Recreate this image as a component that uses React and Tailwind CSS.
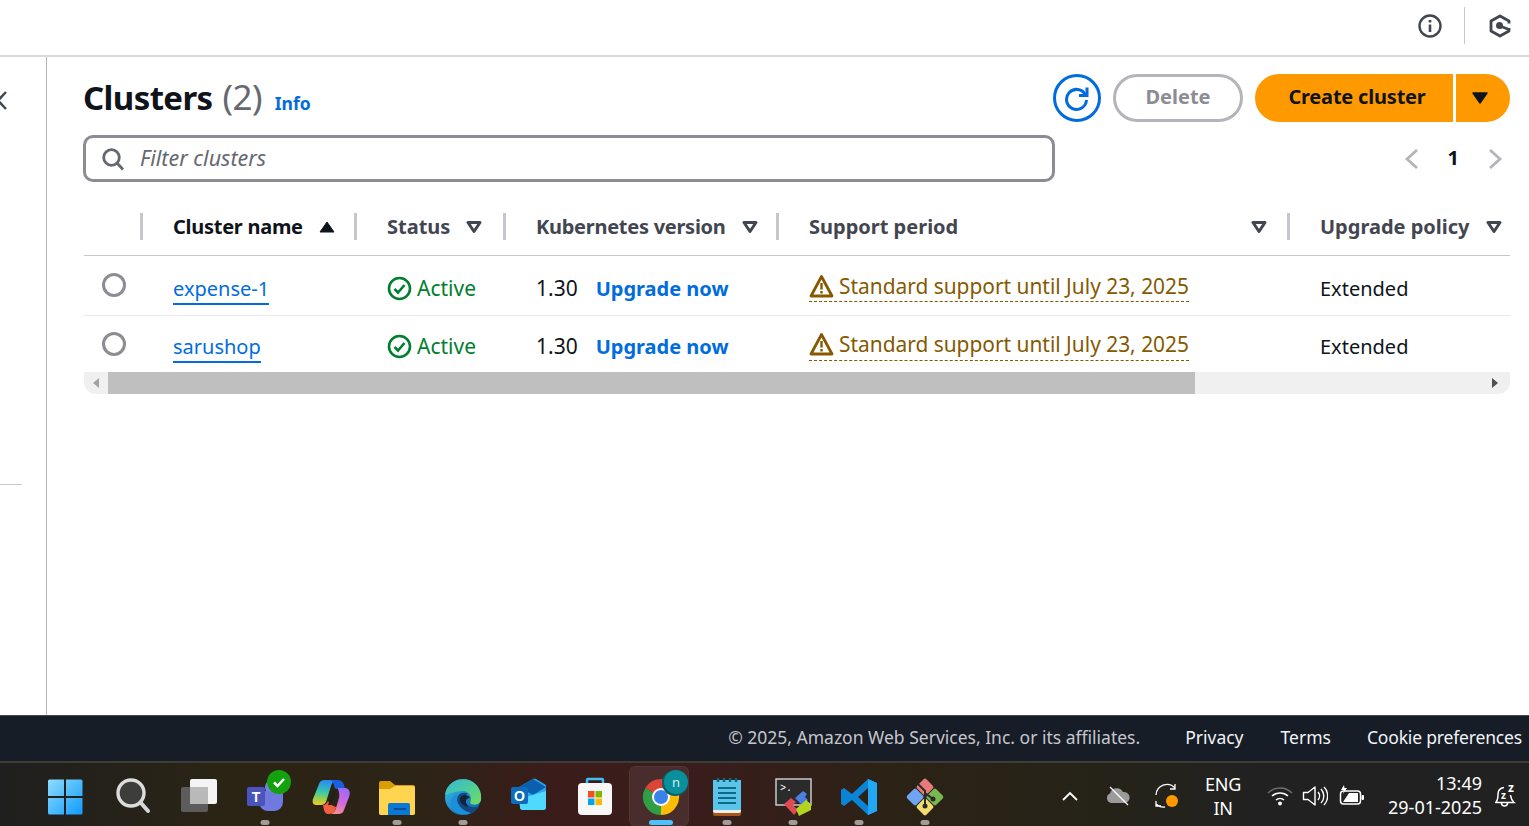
import React from "react";

function Caret({ up }) {
  return (
    <svg width="16" height="14" viewBox="0 0 16 14" className="shrink-0">
      {up ? (
        <path d="M8 2 L15 12 H1 Z" fill="#0f141a" stroke="#0f141a" strokeWidth="1" strokeLinejoin="round" />
      ) : (
        <path d="M2 2.5 H14 L8 11.5 Z" fill="none" stroke="#424650" strokeWidth="3" strokeLinejoin="round" />
      )}
    </svg>
  );
}

function CheckCircle() {
  return (
    <svg width="25" height="25" viewBox="0 0 25 25" className="shrink-0">
      <circle cx="12.5" cy="12.5" r="10.5" fill="none" stroke="#00802f" strokeWidth="2.6" />
      <path d="M7.5 13 L11 16.5 L17.5 9" fill="none" stroke="#00802f" strokeWidth="2.6" />
    </svg>
  );
}

function Warn() {
  return (
    <svg width="25" height="25" viewBox="0 0 25 25" className="shrink-0">
      <path d="M12.5 2.5 L23 22 H2 Z" fill="none" stroke="#855900" strokeWidth="2.8" strokeLinejoin="round" />
      <path d="M12.5 9 V15.5 M12.5 17 V19.5" stroke="#855900" strokeWidth="2.4" />
    </svg>
  );
}

function Th({ children, caret = "down", strong, between, narrow }) {
  return (
    <div className="flex items-center h-[27px] -ml-px border-l-[3px] border-[#c6c6cd] pl-[30px] pr-[6px]">
      <span className={`font-bold ${narrow ? "tracking-[-0.27px]" : ""} ${strong ? "text-[#0f141a]" : "text-[#424650]"}`}>{children}</span>
      <span className={between ? "ml-auto mr-[15px]" : "ml-[16px]"}>
        <Caret up={caret === "up"} />
      </span>
    </div>
  );
}

function Row({ name, last }) {
  return (
    <div className={`grid grid-cols-[57px_214px_149px_273px_511px_222px] text-[21px] ${last ? "h-[56px]" : "h-[60px] border-b-[1px] border-[#e8e8ea]"}`}>
      <div className="pl-[18px] pt-[17px]">
        <div className={`size-[24px] rounded-full border-[3px] border-[#8c8c94] ${last ? "-mt-[1px]" : ""}`} />
      </div>
      <div className={`pl-[32px] ${last ? "pt-[17px]" : "pt-[19px]"}`}>
        <a className="text-[#006ce0] border-b-[2px] border-[#006ce0] inline-block leading-[26px] pb-[1px] text-[20px]">{name}</a>
      </div>
      <div className={`pl-[32px] flex items-start gap-[5px] text-[#00802f] ${last ? "pt-[18px]" : "pt-[20px]"}`}>
        <CheckCircle />
        <span className="leading-[25px]">Active</span>
      </div>
      <div className={`pl-[32px] flex items-start leading-[25px] ${last ? "pt-[18px]" : "pt-[20px]"}`}>
        <span className="text-[#0f141a]">1.30</span>
        <a className="ml-[18px] font-bold text-[20px] text-[#006ce0]">Upgrade now</a>
      </div>
      <div className={`pl-[32px] ${last ? "pt-[13px]" : "pt-[16px]"}`}>
        <div className={`inline-flex items-center gap-[5px] text-[#855900] border-b-[1px] border-dashed border-[#855900] ${last ? "h-[32px]" : "h-[30px]"}`}>
          <Warn />
          <span className="text-[20.9px] pb-[2px]">Standard support until July 23, 2025</span>
        </div>
      </div>
      <div className={`pl-[32px] leading-[25px] text-[#0f141a] text-[20px] ${last ? "pt-[18px]" : "pt-[20px]"}`}>Extended</div>
    </div>
  );
}

function Tile({ children, dot, active }) {
  return (
    <div className="relative w-[66px] first:mr-[2px] h-full flex items-center justify-center pt-[5px]">
      {active && <div className="absolute left-[1px] right-[5px] top-[3px] bottom-0 rounded-[6px] bg-[#ffffff14] border border-[#ffffff0a]" />}
      <div className="relative">{children}</div>
      {dot && <div className="absolute bottom-[1px] left-1/2 -translate-x-1/2 w-[9px] h-[5px] rounded-full bg-[#a09c98]" />}
      {active && <div className="absolute bottom-[1px] left-1/2 -translate-x-1/2 w-[24px] h-[5px] rounded-full bg-[#4cc2ff]" />}
    </div>
  );
}

const I = ({ children }) => (
  <svg width="48" height="48" viewBox="0 0 48 48" className="block overflow-visible">{children}</svg>
);

function TaskIcons() {
  return (
    <>
      <Tile>
        <I>
          <defs>
            <linearGradient id="w" x1="0" y1="0" x2="1" y2="1">
              <stop offset="0" stopColor="#8fdcff" />
              <stop offset="1" stopColor="#0f9bff" />
            </linearGradient>
          </defs>
          <path fill="url(#w)" d="M7 8 a1.5 1.5 0 0 1 1.5 -1.5 H23 V23 H7 Z M25 6.5 H40 a1.5 1.5 0 0 1 1.500 1.500 V23 H25 Z M7 25 H23 V41.500 H8.500 a1.500 1.500 0 0 1 -1.500 -1.500 Z M25 25 H41.500 V40 a1.500 1.500 0 0 1 -1.500 1.500 H25 Z" />
        </I>
      </Tile>
      <Tile>
        <I>
          <circle cx="22" cy="20" r="13" fill="#3d3d3b" stroke="#dcdcdc" strokeWidth="3.400" />
          <path d="M32 30 L39 38" stroke="#d6d6d6" strokeWidth="4" strokeLinecap="round" />
        </I>
      </Tile>
      <Tile>
        <I>
          <rect x="6" y="14" width="27" height="25" rx="2" fill="#5c5c5c" />
          <rect x="15" y="6" width="27" height="25" rx="2" fill="#f4f4f4" />
          <rect x="15" y="14" width="18" height="17" fill="#b9b9b9" />
        </I>
      </Tile>
      <Tile dot>
        <I>
          <circle cx="31" cy="14" r="7" fill="#7b83eb" />
          <path d="M20 18 H39 a3 3 0 0 1 3 3 V29 a9 9 0 0 1 -10 9 H28 a9 9 0 0 1 -10 -9 V20 Z" fill="#7079dd" />
          <rect x="6" y="14" width="18" height="19" rx="2" fill="#4b53bc" />
          <text x="15" y="29" textAnchor="middle" fontSize="14" fontWeight="700" fill="#fff" fontFamily="Liberation Sans, sans-serif">T</text>
          <circle cx="38" cy="9" r="12" fill="#13a10e" />
          <path d="M33 9.500 L36.500 13 L43 6" fill="none" stroke="#fff" strokeWidth="2.500" />
        </I>
      </Tile>
      <Tile>
        <I>
          <defs>
            <linearGradient id="c1" x1="0.3" y1="0" x2="0.2" y2="1">
              <stop offset="0" stopColor="#2a8cf0" />
              <stop offset="0.45" stopColor="#38c6b0" />
              <stop offset="0.75" stopColor="#9ad04a" />
              <stop offset="1" stopColor="#f4c82e" />
            </linearGradient>
            <linearGradient id="c2" x1="0.6" y1="0" x2="0.3" y2="1">
              <stop offset="0" stopColor="#9a6cf5" />
              <stop offset="0.5" stopColor="#d068e0" />
              <stop offset="1" stopColor="#f49090" />
            </linearGradient>
          </defs>
          <path fill="url(#c1)" d="M17 7 H29 C26 8 25 10 24 13 L19 29 C18 31 16 32 14 32 H9 C6 32 5 29 6 26 L12 11 C13 8 15 7 17 7 Z" />
          <path fill="#1a5fe0" d="M22 7 H31 C34 7 36 9 37 12 L38 16 H30 C28 16 27 14 27 12 C26 9 25 7 22 7 Z" />
          <path fill="url(#c2)" d="M31 15 H38 C42 15 44 19 42 24 L37 37 C36 40 34 41 31 41 H24 C27 40 28 38 29 35 L32 25 C33 20 31 17 31 15 Z" />
          <path fill="#f2603f" d="M16 32 C19 32 20 30 21 28 C23 31 25 33 29 34 C28 38 27 41 22 41 H21 C18 41 17 38 16 32 Z" />
          <path fill="#1f2016" d="M26 18 L29 18 L24 32 L21 32 Z" />
        </I>
      </Tile>
      <Tile dot>
        <I>
          <path d="M6 10 a2 2 0 0 1 2 -2 H17 L22 12 H40 a2 2 0 0 1 2 2 V40 a2 2 0 0 1 -2 2 H8 a2 2 0 0 1 -2 -2 Z" fill="#d99e05" />
          <path d="M6 16 H17 L22 13 H40 a2 2 0 0 1 2 2 V40 a2 2 0 0 1 -2 2 H8 a2 2 0 0 1 -2 -2 Z" fill="#ffd54f" />
          <path d="M18 32 a2 2 0 0 1 2 -2 H38 a2 2 0 0 1 2 2 V42 H18 Z" transform="translate(-3 0)" fill="#0a78d4" />
          <rect x="21" y="35" width="12" height="2" fill="#0b4f96" />
        </I>
      </Tile>
      <Tile dot>
        <I>
          <defs>
            <linearGradient id="e1" x1="0" y1="0" x2="1" y2="1">
              <stop offset="0" stopColor="#35c1f1" />
              <stop offset="1" stopColor="#0c59a4" />
            </linearGradient>
            <linearGradient id="e2" x1="0" y1="0" x2="1" y2="1">
              <stop offset="0" stopColor="#2fb8d8" />
              <stop offset="1" stopColor="#6fe05b" />
            </linearGradient>
          </defs>
          <circle cx="24" cy="24" r="18" fill="url(#e1)" />
          <path d="M6 22 C8 8 22 4 32 8 C40 12 43 20 42 27 C41 32 34 33 31 30 C34 24 30 18 24 18 C14 18 8 22 6 22 Z" fill="url(#e2)" />
          <path d="M18 27 C18 21 24 18 29 21 C26 22 25 25 26 28 C28 34 36 36 40 33 C36 41 28 43 23 41 C16 37 17 31 18 27 Z" fill="#11487f" />
          <path d="M18 27 C19 33 24 38 32 40 C24 44 14 40 12 32 C11 26 15 22 20 21 C19 23 18 25 18 27 Z" fill="#1b8fd8" />
          <path d="M31 25 C29 21 23 21 21 25 C20 29 24 33 30 34 C27 32 26 28 28 26 C29 25 30 25 31 25 Z" fill="#14233a" />
        </I>
      </Tile>
      <Tile>
        <I>
          <path d="M14 14 L28 6 a3 3 0 0 1 3 0 L41 12 V34 a3 3 0 0 1 -3 3 H18 a3 3 0 0 1 -3 -3 Z" fill="#28a8ea" />
          <path d="M14 14 L28 6 L41 14 L28 22 Z" fill="#0a5fb0" />
          <path d="M14 26 L41 18 V34 a3 3 0 0 1 -3 3 H18 a3 3 0 0 1 -3 -3 Z" fill="#50d9ff" />
          <rect x="6" y="14" width="17" height="17" rx="2" fill="#0f6cbd" />
          <text x="14.500" y="28" textAnchor="middle" fontSize="14" fontWeight="700" fill="#fff" fontFamily="Liberation Sans, sans-serif">O</text>
        </I>
      </Tile>
      <Tile>
        <I>
          <path d="M16 12 V7 a1 1 0 0 1 1 -1 H31 a1 1 0 0 1 1 1 V12" fill="none" stroke="#3ec0f4" strokeWidth="2.500" />
          <rect x="7" y="10" width="34" height="32" rx="4" fill="#f7f7f7" />
          <rect x="17" y="18" width="6.500" height="6.500" fill="#f25022" />
          <rect x="24.500" y="18" width="6.500" height="6.500" fill="#7fba00" />
          <rect x="17" y="25.500" width="6.500" height="6.500" fill="#00a4ef" />
          <rect x="24.500" y="25.500" width="6.500" height="6.500" fill="#ffb900" />
        </I>
      </Tile>
      <Tile active>
        <I>
          <path d="M24 24 L8.400 15 A18 18 0 0 1 39.600 15 Z" fill="#db4437" />
          <path d="M24 24 L39.600 15 A18 18 0 0 1 24 42 Z" fill="#fbbc05" />
          <path d="M24 24 L24 42 A18 18 0 0 1 8.400 15 Z" fill="#2f9e44" />
          <circle cx="24" cy="24" r="9" fill="#fff" />
          <circle cx="24" cy="24" r="7" fill="#3b82e8" />
          <circle cx="38" cy="10" r="13" fill="#0b5f66" />
          <circle cx="39" cy="9" r="12" fill="#0a8f9c" />
          <text x="39" y="14" textAnchor="middle" fontSize="13" fill="#cdeef2" fontFamily="Noto Sans, sans-serif">n</text>
        </I>
      </Tile>
      <Tile dot>
        <I>
          <rect x="10" y="7" width="28" height="36" rx="2" fill="#a8551a" />
          <rect x="10" y="7" width="28" height="33" rx="2" fill="#eee" />
          <rect x="10" y="7" width="28" height="30" fill="#5cc4e8" />
          <path d="M15 5 V9 M21 5 V9 M27 5 V9 M33 5 V9" stroke="#0d6680" strokeWidth="2.500" />
          <path d="M15 15 H33 M15 20 H33 M15 25 H33 M15 30 H33" stroke="#0d6a88" strokeWidth="1.800" />
        </I>
      </Tile>
      <Tile dot>
        <I>
          <rect x="7" y="6" width="35" height="26" fill="#2b2b2b" stroke="#c9c9c9" strokeWidth="1.500" />
          <text x="11" y="18" fontSize="10" fill="#fff" fontFamily="Liberation Mono, monospace">&gt;.</text>
          <path d="M15 31 L22 25 L27 29 L24 32 L29 37 L25 42 Z" fill="#e04a55" />
          <path d="M26 25 L34 18 L38 21 L36 24 L39 27 L33 32 Z" fill="#4d7fe0" />
          <path d="M27 36 L37 27 L42 31 V37 L30 43 Z" fill="#b3d51f" />
        </I>
      </Tile>
      <Tile dot>
        <I>
          <path d="M33 6 L42 10 V38 L33 42 L17 27 L9 33 L6 31 V17 L9 15 L17 21 Z M33 15 L23 24 L33 33 Z" fill="#0a84d6" fillRule="evenodd" />
          <path d="M33 6 L42 10 V38 L33 42 Z" fill="#22a7f2" />
        </I>
      </Tile>
      <Tile dot>
        <I>
          <g transform="rotate(45 24 24)">
            <rect x="10.500" y="10.500" width="13" height="13" rx="2" fill="#e87a7a" />
            <rect x="24.500" y="10.500" width="13" height="13" rx="2" fill="#79b84f" />
            <rect x="10.500" y="24.500" width="13" height="13" rx="2" fill="#6ea5f5" />
            <rect x="24.500" y="24.500" width="13" height="13" rx="2" fill="#f3dc6e" />
          </g>
          <path d="M17 11 L24 18 V32 M24 20 L32 26" fill="none" stroke="#2a2a2a" strokeWidth="2" />
          <circle cx="24" cy="33" r="2.500" fill="#2a2a2a" />
          <circle cx="32" cy="26" r="2.500" fill="#2a2a2a" />
        </I>
      </Tile>
    </>
  );
}

function Tray() {
  return (
    <div className="flex items-center h-full pt-[3px] pr-[9px] text-white text-[18px] leading-[24px]">
      <svg width="20" height="12" viewBox="0 0 20 12" className="mr-[25px]">
        <path d="M3 10 L10 3 L17 10" fill="none" stroke="#fff" strokeWidth="1.800" />
      </svg>
      <svg width="26" height="20" viewBox="0 0 26 20" className="mr-[23px]">
        <path d="M6 17 a5 5 0 0 1 -1 -9.500 a7 7 0 0 1 13 -1.500 a5.500 5.500 0 0 1 2 11 Z" fill="#9b9b9b" />
        <path d="M5 1 L23 19" stroke="#fff" strokeWidth="1.200" />
      </svg>
      <svg width="26" height="28" viewBox="0 0 26 28" className="mr-[25px]">
        <path d="M2 13 a11 11 0 0 1 19 -7 M21 2 V7 H16" fill="none" stroke="#fff" strokeWidth="1.300" />
        <path d="M2 22 a11 11 0 0 0 9 3 M2 19 V24 H7" fill="none" stroke="#fff" strokeWidth="1.300" />
        <circle cx="18" cy="19" r="6" fill="#ff9900" />
      </svg>
      <div className="w-[36px] text-center mr-[26px] tracking-[-0.3px]">
        <div>ENG</div>
        <div>IN</div>
      </div>
      <svg width="26" height="22" viewBox="0 0 26 22" className="mr-[9px]">
        <path d="M1 8 a17 17 0 0 1 24 0" fill="none" stroke="#6f6f6f" strokeWidth="1.500" />
        <path d="M5 11 a12 12 0 0 1 16 0 M9 15 a6 6 0 0 1 8 0" fill="none" stroke="#fff" strokeWidth="1.600" />
        <circle cx="13" cy="18.500" r="2" fill="#fff" />
      </svg>
      <svg width="26" height="24" viewBox="0 0 26 24" className="mr-[11px]">
        <path d="M1.500 8.500 H6 L13 3 V21 L6 15.500 H1.500 Z" fill="none" stroke="#fff" strokeWidth="1.400" strokeLinejoin="round" />
        <path d="M16 8 a6 6 0 0 1 0 8 M19 5 a10 10 0 0 1 0 14 M22 3 a13 13 0 0 1 0 18" fill="none" stroke="#fff" strokeWidth="1.400" />
      </svg>
      <svg width="26" height="24" viewBox="0 0 26 24" className="mr-[17px]">
        <rect x="1.500" y="7" width="20" height="13" rx="3" fill="none" stroke="#fff" strokeWidth="1.500" />
        <rect x="22.500" y="11" width="2.500" height="5" rx="1" fill="#fff" />
        <path d="M4 18 L10 9 H19 V18 Z" fill="#fff" />
        <path d="M5 1 L2 6 H5 L4 10 L8 4 H5.500 Z" fill="#fff" />
      </svg>
      <div className="text-right w-[100px] mr-[11px] -mt-[2px]">
        <div>13:49</div>
        <div>29-01-2025</div>
      </div>
      <svg width="24" height="36" viewBox="0 -4 24 36" className="mr-[3px]">
        <path d="M3 20 C5 18 5 15 5 12 C5 8 8 6 11 5.500 M2 20.500 H21 C18 18 18 16 17.500 13" fill="none" stroke="#fff" strokeWidth="1.500" />
        <path d="M8.500 21 a3 3 0 0 0 6 0" fill="none" stroke="#fff" strokeWidth="1.500" />
        <text x="8" y="17" fontSize="10" fontWeight="700" fill="#fff" fontFamily="Noto Sans, sans-serif">z</text>
        <text x="15" y="10" fontSize="12" fontWeight="700" fill="#fff" fontFamily="Noto Sans, sans-serif">z</text>
      </svg>
    </div>
  );
}

export default function App() {
  return (
    <div className="h-[826px] w-[1529px] overflow-hidden flex flex-col bg-white text-[20px] leading-[26px] text-[#0f141a] font-['Noto_Sans',sans-serif]">
      <header className="h-[57px] shrink-0 border-b-[2px] border-[#d9d9dc] flex justify-end items-start">
        <div className="flex items-center h-[49px] mt-[1px] pr-[17px]">
          <svg width="26" height="26" viewBox="0 0 26 26" className="mr-[21px]">
            <circle cx="13" cy="13" r="10.500" fill="none" stroke="#424650" strokeWidth="2.400" />
            <path d="M13 11.500 V19 M13 7 V9.500" stroke="#424650" strokeWidth="2.600" />
          </svg>
          <div className="w-[1px] h-[37px] bg-[#c6c6cd] mr-[23px]" />
          <svg width="24" height="26" viewBox="0 0 24 26">
            <path d="M21 10.500 V8 L12 3 L3 8 V18 L12 23 L21 18 V15" fill="none" stroke="#424650" strokeWidth="2.800" strokeLinejoin="round" />
            <circle cx="11.500" cy="12.500" r="3.500" fill="#424650" />
            <path d="M12 13 L21 16.500" stroke="#424650" strokeWidth="2.800" />
          </svg>
        </div>
      </header>

      <div className="flex flex-1 min-h-0">
        <aside className="w-[47px] shrink-0 border-r-[1px] border-[#b4b4bb] flex flex-col">
          <svg width="8" height="20" viewBox="0 0 8 20" className="mt-[34px]">
            <path d="M-2 9.500 L6 1 M-2 9.500 L6 18" fill="none" stroke="#424650" strokeWidth="2.400" />
          </svg>
          <div className="mt-[373px] w-[22px] h-[1px] bg-[#c6c6cd]" />
        </aside>

        <main className="flex-1 min-w-0 pl-[37px] pr-[19px]">
          <div className="flex items-start pt-[17px] h-[78px]">
            <h1 className="text-[33px] leading-[48px] -mt-[1px] -ml-px font-bold tracking-[-0.6px] text-[#0f141a]">
              Clusters <span className="font-normal text-[35px] ml-[2px] text-[#656871]">(2)</span>
            </h1>
            <a className="ml-[13px] mt-[16px] text-[17.5px] leading-[26px] font-bold text-[#006ce0]">Info</a>
            <div className="ml-auto flex items-center h-[48px]">
              <div className="size-[48px] rounded-full border-[3px] border-[#006ce0] flex items-center justify-center">
                <svg width="28" height="28" viewBox="0 0 28 28">
                  <path d="M22.500 11 A10 10 0 1 0 23.500 16" fill="none" stroke="#006ce0" strokeWidth="3" />
                  <path d="M24 3.500 V11.500 H16" fill="none" stroke="#006ce0" strokeWidth="3" />
                </svg>
              </div>
              <div className="ml-[12px] w-[130px] h-[48px] pb-[2px] rounded-full border-[3px] border-[#b4b4bb] flex items-center justify-center font-bold text-[#8c8c94]">
                Delete
              </div>
              <div className="ml-[12px] w-[198px] h-[48px] pb-[2px] rounded-l-full bg-[#ff9900] flex items-center justify-center font-bold tracking-[-0.2px] text-[#0f141a] pl-[6px]">
                Create cluster
              </div>
              <div className="ml-[3px] w-[54px] h-[48px] rounded-r-full bg-[#ff9900] flex items-center justify-center pr-[6px]">
                <svg width="18" height="14" viewBox="0 0 18 14">
                  <path d="M2 2 H16 L9 12 Z" fill="#0f141a" stroke="#0f141a" strokeWidth="1.500" strokeLinejoin="round" />
                </svg>
              </div>
            </div>
          </div>

          <div className="flex items-center">
            <div className="-ml-px w-[972px] h-[47px] rounded-[10px] border-[3px] border-[#8c8c94] flex items-center pl-[14px]">
              <svg width="26" height="26" viewBox="0 0 26 26">
                <circle cx="11.500" cy="11.500" r="7.800" fill="none" stroke="#656871" strokeWidth="2.800" />
                <path d="M17 17 L23 23.500" stroke="#656871" strokeWidth="2.800" />
              </svg>
              <span className="ml-[14px] pb-[2px] italic text-[21.5px] text-[#656871]">Filter clusters</span>
            </div>
            <div className="ml-auto flex items-center mr-[7px]">
              <svg width="16" height="22" viewBox="0 0 16 22">
                <path d="M13 2 L3 11 L13 20" fill="none" stroke="#b4b4bb" strokeWidth="2.800" />
              </svg>
              <span className="mx-[28px] pb-[2px] font-bold text-[#0f141a]">1</span>
              <svg width="16" height="22" viewBox="0 0 16 22">
                <path d="M3 2 L13 11 L3 20" fill="none" stroke="#b4b4bb" strokeWidth="2.800" />
              </svg>
            </div>
          </div>

          <div className="mt-[18px] h-[56px] pt-[13px] grid grid-cols-[57px_214px_149px_273px_511px_222px] items-start border-b-[1px] border-[#c6c6cd]">
            <div />
            <Th strong caret="up" narrow>Cluster name</Th>
            <Th>Status</Th>
            <Th narrow>Kubernetes version</Th>
            <Th between>Support period</Th>
            <Th>Upgrade policy</Th>
          </div>

          <Row name="expense-1" />
          <Row name="sarushop" last />

          <div className="h-[22px] rounded-b-[12px] bg-[#f0f0f0] flex items-center">
            <div className="w-[24px] flex justify-center">
              <svg width="8" height="12" viewBox="0 0 8 12"><path d="M7 1 V11 L1 6 Z" fill="#a3a3a3" /></svg>
            </div>
            <div className="w-[1087px] h-full bg-[#bfbfbf]" />
            <div className="ml-auto w-[30px] flex justify-center">
              <svg width="8" height="12" viewBox="0 0 8 12"><path d="M1 1 V11 L7 6 Z" fill="#505050" /></svg>
            </div>
          </div>
        </main>
      </div>

      <footer className="h-[46px] shrink-0 bg-[#161d26] border-t-[1px] border-[#424650] flex items-center justify-end pr-[7px] pb-[3px] text-[17.5px]">
        <span className="text-[#c6c6cd]">© 2025, Amazon Web Services, Inc. or its affiliates.</span>
        <a className="ml-[45px] text-[#f3f3f7]">Privacy</a>
        <a className="ml-[37px] text-[#f3f3f7]">Terms</a>
        <a className="ml-[36px] tracking-[-0.17px] text-[#f3f3f7]">Cookie preferences</a>
      </footer>

      <div className="h-[65px] shrink-0 border-t-[2px] border-[#3f3b36] bg-[linear-gradient(90deg,#1f1f1f_0%,#2a2415_14%,#2c2416_27%,#3a1c1a_36%,#3a1c1c_44%,#2c2216_58%,#252318_72%,#212121_82%,#212121_100%)] flex justify-between">
        <div className="flex h-full pl-[32px]">
          <TaskIcons />
        </div>
        <Tray />
      </div>
    </div>
  );
}
